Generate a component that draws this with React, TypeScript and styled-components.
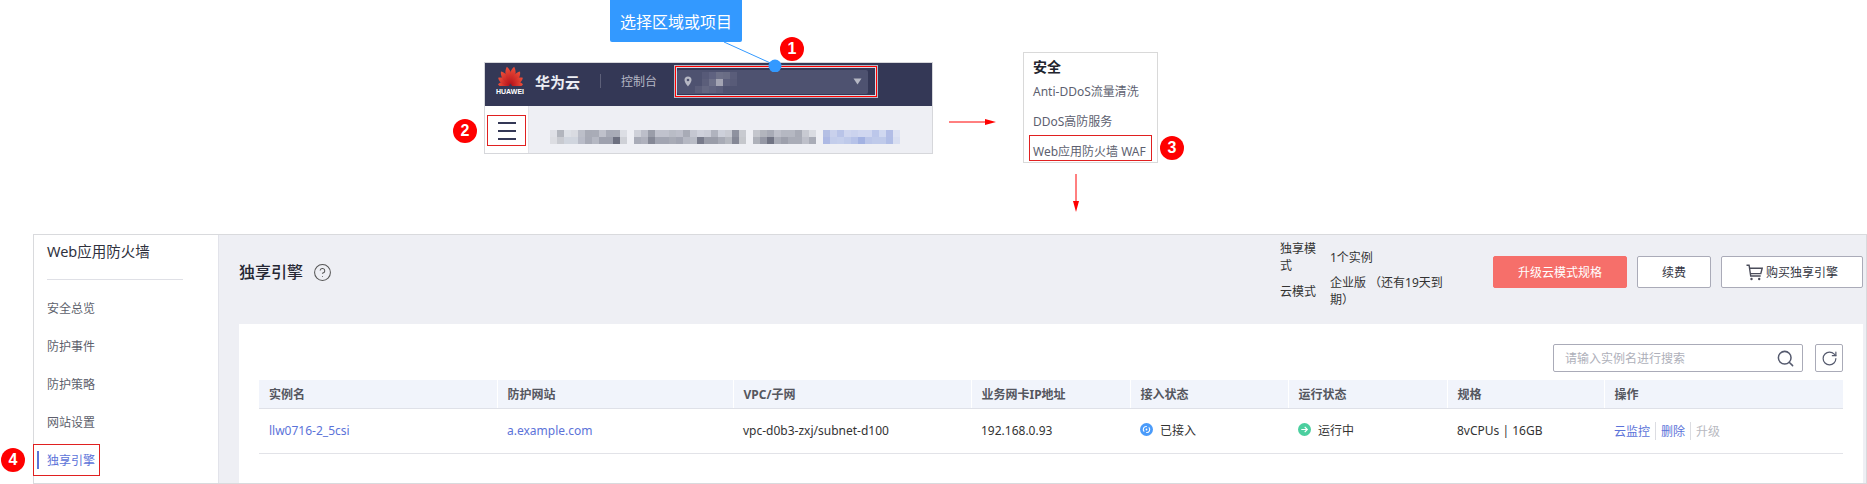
import React from 'react';
import styled, { createGlobalStyle } from 'styled-components';
import { CircleHelp, RotateCw, Search } from 'lucide-react';

const GlobalStyle = createGlobalStyle`
  html, body {
    margin: 0;
    padding: 0;
    background: #fff;
  }
  body {
    font-family: "Noto Sans", "Noto Sans CJK SC", sans-serif;
    font-size: 12px;
    color: #333;
  }
`;

const CELL = 7;

const mosaicRows: [number, number, string[]][] = [
  [0, 0, 'dfe0e6 b2b5bd dde0e6 d9dbe1 bcbfc9 a8abb6 a9acb7 bfc1cb a8abb7 a9acb7 dcdee4'.split(' ')],
  [0, 1, 'dcdde2 c8cad0 d0d5de d0d5de b9bcc8 a7aab6 b5b8c3 9ea1ae 9ea1ae 6d7080 cfd1d7'.split(' ')],
  [12, 0, 'cfd1d9 bcbec9 9a9da9 c0c2cd c0c2cd b9bcc6 bdbfca a8abb6 c5c7d1 cfd1db cbcdd7 b0b3be cdd0da c9cbd3 8f929f c8cad0'.split(' ')],
  [12, 1, 'a9acb8 afb1bd 858896 a2a5b2 a2a5b2 a8abb6 a2a5b2 b5b8c3 b9bcc6 787b8b 9a9da9 9a9da9 a8abb6 b5b8c0 858896 c5c7cc'.split(' ')],
  [29, 0, 'c4c6cd b2b5bd a8abb6 bec0ca b5b8c2 b5b8c2 a8abb6 c8cad2 dadce2'.split(' ')],
  [29, 1, 'aeb1ba 9598a5 717484 a8abb6 9da0ac a9acb7 a9acb7 bec0ca a9acb7'.split(' ')],
  [39, 0, 'b4bfe4 c9d1ec b9c4e8 cfd6ef cbd3ee d0d7f0 d0d7f0 bcc7ea d0d8f0 b2bde6 dde2f3'.split(' ')],
  [39, 1, 'adb9e4 c3cdeb c5cfec bfcaea b6c2e8 a3b2e2 bbc6e9 bfcaea bfcaea b0bde6 d8def1'.split(' ')],
];

const regionRows: [number, number, string[]][] = [
  [1, 0, '575a78 5f6280 6d7088 6a6d85 5a5d7a'.split(' ')],
  [1, 1, '5b5e7a 6d7089 a3a4b3 5c5f7c 585b78'.split(' ')],
  [0, 2, '5a5d79 646781 5f627e 5a5d7a'.split(' ')],
];

const columns = [
  { title: '实例名', width: 238 },
  { title: '防护网站', width: 236 },
  { title: 'VPC/子网', width: 238 },
  { title: '业务网卡IP地址', width: 159 },
  { title: '接入状态', width: 158 },
  { title: '运行状态', width: 159 },
  { title: '规格', width: 157 },
  { title: '操作', width: 239 },
];

const navItems = ['安全总览', '防护事件', '防护策略', '网站设置'];

const petals = [
  { angle: -84, length: 12.5 },
  { angle: -58, length: 14.5 },
  { angle: -34, length: 17 },
  { angle: -11, length: 19 },
  { angle: 11, length: 19 },
  { angle: 34, length: 17 },
  { angle: 58, length: 14.5 },
  { angle: 84, length: 12.5 },
];

const Mosaic: React.FC<{ rows: [number, number, string[]][]; width: number; height: number }> = ({ rows, width, height }) => (
  <svg width={width} height={height} viewBox={`0 0 ${width} ${height}`}>
    {rows.map(([start, row, colors]) =>
      colors.map((color, i) => (
        <rect
          key={`${start}-${row}-${i}`}
          x={(start + i) * CELL}
          y={row * CELL}
          width={CELL}
          height={CELL}
          fill={`#${color}`}
        />
      ))
    )}
  </svg>
);

const HuaweiLogo = () => (
  <svg width="27" height="20" viewBox="0 0 27 20">
    <defs>
      <linearGradient id="petal" x1="0" y1="0" x2="0" y2="1">
        <stop offset="0" stopColor="#f0503a" />
        <stop offset="1" stopColor="#b5121b" />
      </linearGradient>
    </defs>
    {petals.map(({ angle, length }) => (
      <path
        key={angle}
        transform={`translate(13.5 19.5) rotate(${angle})`}
        d={`M0 -1 C-4.2 -${length * 0.4} -3.4 -${length * 0.8} 0 -${length} C3.4 -${length * 0.8} 4.2 -${length * 0.4} 0 -1Z`}
        fill="url(#petal)"
      />
    ))}
  </svg>
);

const CartIcon = () => (
  <svg width="17" height="17" viewBox="0 0 17 17" fill="none" stroke="#4a4c5a" strokeWidth="1.4">
    <path d="M0.5 1.2h2.6l1.6 10.8h10" />
    <path d="M3.6 4.2h12.6l-1.4 5.4H4.4" />
    <circle cx="5.5" cy="15" r="1.2" fill="#4a4c5a" stroke="none" />
    <circle cx="13.2" cy="15" r="1.2" fill="#4a4c5a" stroke="none" />
  </svg>
);

const LinkedIcon = () => (
  <svg width="13" height="13" viewBox="0 0 13 13">
    <circle cx="6.5" cy="6.5" r="6.5" fill="#4a9bfa" />
    <path d="M4.2 8.6a3 3 0 0 1 2.6-5.1M8.8 4.4a3 3 0 0 1-2.6 5.1" fill="none" stroke="#fff" strokeWidth="1.1" />
    <circle cx="6.5" cy="6.5" r="0.9" fill="#fff" />
  </svg>
);

const RunningIcon = () => (
  <svg width="13" height="13" viewBox="0 0 13 13">
    <circle cx="6.5" cy="6.5" r="6.5" fill="#4bcf9f" />
    <path d="M3.3 6.5h6M6.7 3.9l2.6 2.6-2.6 2.6" fill="none" stroke="#fff" strokeWidth="1.2" />
  </svg>
);

const App: React.FC = () => (
  <Page>
    <GlobalStyle />
    <Diagram>
      <Callout>选择区域或项目</Callout>
      <Leader width="60" height="30" viewBox="0 0 60 30">
        <line x1="2" y1="0" x2="55" y2="24" stroke="#3399ff" strokeWidth="1" />
        <circle cx="53" cy="24" r="6.5" fill="#3399ff" />
      </Leader>

      <ConsoleShot>
        <TopBar>
          <LogoBlock>
            <HuaweiLogo />
            <LogoText>HUAWEI</LogoText>
          </LogoBlock>
          <Brand>华为云</Brand>
          <BarDivider />
          <ConsoleLabel>控制台</ConsoleLabel>
          <RegionBox>
            <Badge>1</Badge>
            <RegionSelect>
              <svg width="8" height="11" viewBox="0 0 8 11">
                <path d="M4 0.5a3.5 3.5 0 0 1 3.5 3.5C7.5 6.5 4 10.5 4 10.5S0.5 6.5 0.5 4A3.5 3.5 0 0 1 4 0.5Z" fill="#b6b8c4" />
                <circle cx="4" cy="4" r="1.3" fill="#4e5270" />
              </svg>
              <RegionMosaic>
                <Mosaic rows={regionRows} width={42} height={21} />
              </RegionMosaic>
              <svg width="9" height="7" viewBox="0 0 9 7">
                <path d="M0.5 0.5h8L4.5 6.5Z" fill="#b6b8c4" />
              </svg>
            </RegionSelect>
          </RegionBox>
        </TopBar>
        <SubBar>
          <MenuColumn>
            <Hamburger>
              <Badge $side="left" $gap={11}>2</Badge>
              <HamburgerLine />
              <HamburgerLine />
              <HamburgerLine />
            </Hamburger>
          </MenuColumn>
          <Crumbs>
            <Mosaic rows={mosaicRows} width={350} height={14} />
          </Crumbs>
        </SubBar>
      </ConsoleShot>

      <ArrowRight width="48" height="8" viewBox="0 0 48 8">
        <path d="M0 4h36" stroke="#f00" strokeWidth="1" />
        <path d="M36 1l11 3-11 3Z" fill="#f00" />
      </ArrowRight>

      <MenuColumnFlow>
        <MenuCard>
          <MenuTitle>安全</MenuTitle>
          <MenuItem>Anti-DDoS流量清洗</MenuItem>
          <MenuItem>DDoS高防服务</MenuItem>
          <MenuItem $picked>
            Web应用防火墙 WAF
            <Badge $side="right" $gap={8}>3</Badge>
          </MenuItem>
        </MenuCard>
        <ArrowDown width="8" height="39" viewBox="0 0 8 39">
          <path d="M4 0v28" stroke="#f00" strokeWidth="1" />
          <path d="M1 27l3 11 3-11Z" fill="#f00" />
        </ArrowDown>
      </MenuColumnFlow>
    </Diagram>

    <Panel>
      <Sidebar>
        <SideTitle>Web应用防火墙</SideTitle>
        <SideDivider />
        <NavList>
          {navItems.map((item) => (
            <NavItem key={item}>{item}</NavItem>
          ))}
          <NavItem $active>
            <ActiveBar />
            独享引擎
            <Badge $side="left" $gap={8}>4</Badge>
          </NavItem>
        </NavList>
      </Sidebar>

      <Content>
        <ContentHeader>
          <PageTitle>独享引擎</PageTitle>
          <CircleHelp size={19} strokeWidth={1.3} color="#555" />
          <InfoGrid>
            <InfoLabel>独享模式</InfoLabel>
            <span>1个实例</span>
            <InfoLabel>云模式</InfoLabel>
            <span>企业版 （还有19天到期）</span>
          </InfoGrid>
          <Actions>
            <Button $primary $width={134}>升级云模式规格</Button>
            <Button $width={74}>续费</Button>
            <Button $width={142}>
              <CartIcon />
              购买独享引擎
            </Button>
          </Actions>
        </ContentHeader>

        <Card>
          <SearchRow>
            <SearchBox>
              <SearchHint>请输入实例名进行搜索</SearchHint>
              <Search size={19} strokeWidth={1.9} color="#555a6e" />
            </SearchBox>
            <IconButton>
              <RotateCw size={17} strokeWidth={1.7} color="#555a6e" />
            </IconButton>
          </SearchRow>

          <Table>
            <thead>
              <tr>
                {columns.map((col) => (
                  <HeadCell key={col.title} $width={col.width}>{col.title}</HeadCell>
                ))}
              </tr>
            </thead>
            <tbody>
              <tr>
                <Cell><TextLink>llw0716-2_5csi</TextLink></Cell>
                <Cell><TextLink>a.example.com</TextLink></Cell>
                <Cell>vpc-d0b3-zxj/subnet-d100</Cell>
                <Cell>192.168.0.93</Cell>
                <Cell><Status><LinkedIcon />已接入</Status></Cell>
                <Cell><Status><RunningIcon />运行中</Status></Cell>
                <Cell>8vCPUs | 16GB</Cell>
                <Cell>
                  <OpLinks>
                    <TextLink>云监控</TextLink>
                    <TextLink>删除</TextLink>
                    <DisabledLink>升级</DisabledLink>
                  </OpLinks>
                </Cell>
              </tr>
            </tbody>
          </Table>
        </Card>
      </Content>
    </Panel>
  </Page>
);

// Styled Components
const Page = styled.div`
  width: 1867px;
  height: 484px;
  overflow: hidden;
`;

const Diagram = styled.div`
  position: relative;
  display: flex;
  align-items: flex-start;
  height: 234px;
  padding-left: 484px;
  box-sizing: border-box;
`;

const Callout = styled.div`
  position: absolute;
  left: 610px;
  top: 0;
  width: 132px;
  height: 42px;
  display: flex;
  align-items: center;
  justify-content: center;
  background: #3399ff;
  border-radius: 0 0 2px 2px;
  color: #fff;
  font-size: 16px;
`;

const Leader = styled.svg`
  position: absolute;
  left: 722px;
  top: 42px;
  z-index: 2;
`;

const Badge = styled.span<{ $side?: 'left' | 'right'; $gap?: number }>`
  position: absolute;
  width: 24px;
  height: 24px;
  border-radius: 50%;
  background: #f00;
  color: #fff;
  font-family: "Liberation Sans", sans-serif;
  font-size: 16px;
  font-weight: 700;
  line-height: 24px;
  text-align: center;
  ${(p) => (p.$side === 'left' ? `right: calc(100% + ${p.$gap}px); top: 50%; transform: translateY(-50%);` : '')}
  ${(p) => (p.$side === 'right' ? `left: calc(100% + ${p.$gap}px); top: 50%; transform: translateY(-50%);` : '')}
  ${(p) => (!p.$side ? 'left: 104px; top: -30px;' : '')}
`;

const ConsoleShot = styled.div`
  width: 449px;
  height: 92px;
  margin-top: 62px;
  box-sizing: border-box;
  border: 1px solid #d6d7db;
  background: #eeeff4;
`;

const TopBar = styled.div`
  display: flex;
  align-items: center;
  height: 43px;
  padding-bottom: 7px;
  box-sizing: border-box;
  background: #343856;
`;

const LogoBlock = styled.div`
  width: 50px;
  display: flex;
  flex-direction: column;
  align-items: center;
  color: #fff;
`;

const LogoText = styled.span`
  font-family: "Liberation Sans", sans-serif;
  font-size: 7px;
  font-weight: 700;
  line-height: 8px;
  margin-top: 2px;
`;

const Brand = styled.span`
  font-size: 15px;
  font-weight: 700;
  color: #eceef4;
`;

const BarDivider = styled.span`
  width: 1px;
  height: 14px;
  margin: 0 20px;
  background: #5d6079;
`;

const ConsoleLabel = styled.span`
  font-size: 12px;
  color: #b5b7c5;
`;

const RegionBox = styled.div`
  position: relative;
  flex: none;
  width: 202px;
  height: 31px;
  margin-left: 18px;
  padding: 3px 1px 0;
  box-sizing: border-box;
  border: 1px solid #f00;
  outline: 1px solid #b6b8c4;
  box-shadow: inset 0 0 0 1px #d8d9e2;
`;

const RegionSelect = styled.div`
  display: flex;
  align-items: center;
  justify-content: space-between;
  width: 191px;
  height: 24px;
  padding: 0 6px 0 7px;
  box-sizing: border-box;
  border-radius: 2px;
  background: #4e5270;
`;

const RegionMosaic = styled.div`
  display: flex;
  flex: 1;
  margin: 2px 0 0 3px;
`;

const SubBar = styled.div`
  display: flex;
  height: 47px;
`;

const MenuColumn = styled.div`
  width: 44px;
  padding: 9px 0 0 2px;
  box-sizing: border-box;
  background: #fff;
  border-right: 1px solid #e2e3e8;
`;

const Hamburger = styled.div`
  position: relative;
  width: 39px;
  height: 31px;
  box-sizing: border-box;
  border: 1px solid #e02020;
  display: flex;
  flex-direction: column;
  align-items: center;
  justify-content: center;
  gap: 6px;
`;

const HamburgerLine = styled.span`
  width: 18px;
  height: 2px;
  background: #343856;
`;

const Crumbs = styled.div`
  padding: 24px 0 0 21px;
  display: flex;
  line-height: 0;
`;

const ArrowRight = styled.svg`
  margin: 118px 0 0 16px;
  flex: none;
`;

const MenuColumnFlow = styled.div`
  display: flex;
  flex-direction: column;
  align-items: flex-start;
  margin-left: 26px;
  margin-top: 52px;
`;

const MenuCard = styled.div`
  width: 135px;
  height: 111px;
  box-sizing: border-box;
  border: 1px solid #d9d9d9;
  padding: 4px 5px 0;
`;

const MenuTitle = styled.div`
  padding-left: 4px;
  height: 20px;
  line-height: 20px;
  font-size: 14px;
  font-weight: 700;
  color: #22242e;
`;

const MenuItem = styled.div<{ $picked?: boolean }>`
  position: relative;
  padding-left: 4px;
  margin-top: ${(p) => (p.$picked ? '-2px' : '0')};
  height: ${(p) => (p.$picked ? '26px' : '30px')};
  line-height: ${(p) => (p.$picked ? '34px' : '30px')};
  box-sizing: border-box;
  white-space: nowrap;
  font-size: 12px;
  color: #5d5f70;
  ${(p) => (p.$picked ? 'outline: 1px solid #e02020; outline-offset: -1px;' : '')}
`;

const ArrowDown = styled.svg`
  margin: 11px 0 0 49px;
`;

const Panel = styled.div`
  display: flex;
  width: 1834px;
  height: 250px;
  margin-left: 33px;
  box-sizing: border-box;
  border: 1px solid #d9dadd;
  background: #eeeff4;
`;

const Sidebar = styled.div`
  width: 185px;
  flex: none;
  box-sizing: border-box;
  background: #fff;
  border-right: 1px solid #e2e3ea;
  padding: 5px 0 0 13px;
`;

const SideTitle = styled.div`
  font-size: 14.5px;
  line-height: 22px;
  color: #30323e;
`;

const SideDivider = styled.div`
  width: 136px;
  height: 1px;
  margin-top: 17px;
  background: #dfe0e6;
`;

const NavList = styled.div`
  margin: 10px 0 0 -13px;
`;

const NavItem = styled.div<{ $active?: boolean }>`
  position: relative;
  width: ${(p) => (p.$active ? '67px' : 'auto')};
  height: ${(p) => (p.$active ? '32px' : '38px')};
  line-height: ${(p) => (p.$active ? '33px' : '38px')};
  margin: ${(p) => (p.$active ? '2px 0 0 -1px' : '0')};
  padding-left: ${(p) => (p.$active ? '14px' : '13px')};
  box-sizing: border-box;
  font-size: 12px;
  color: ${(p) => (p.$active ? '#5c73d9' : '#5d5f6c')};
  ${(p) => (p.$active ? 'outline: 1px solid #e02020; outline-offset: -1px;' : '')}
`;

const ActiveBar = styled.span`
  position: absolute;
  left: 4px;
  top: 7px;
  width: 2px;
  height: 18px;
  background: #5c73d9;
`;

const Content = styled.div`
  flex: 1;
  min-width: 0;
  display: flex;
  flex-direction: column;
`;

const ContentHeader = styled.div`
  display: flex;
  align-items: flex-start;
  height: 89px;
  padding: 5px 3px 0 20px;
  box-sizing: border-box;

  > svg {
    margin: 23px 0 0 10px;
  }
`;

const PageTitle = styled.h1`
  margin: 16px 0 0;
  font-size: 16px;
  font-weight: 500;
  line-height: 32px;
  color: #252733;
`;

const InfoGrid = styled.div`
  display: grid;
  grid-template-columns: 38px 113px;
  column-gap: 12px;
  align-items: center;
  width: 163px;
  margin: 0 50px 0 auto;
  line-height: 17px;
  color: #333;
`;

const InfoLabel = styled.span`
  word-break: break-all;
`;

const Actions = styled.div`
  display: flex;
  gap: 10px;
  margin-top: 16px;
`;

const Button = styled.div<{ $primary?: boolean; $width: number }>`
  display: flex;
  align-items: center;
  justify-content: center;
  gap: 3px;
  width: ${(p) => p.$width}px;
  height: 32px;
  box-sizing: border-box;
  border-radius: 2px;
  border: 1px solid ${(p) => (p.$primary ? '#f66f6a' : '#aaabb8')};
  background: ${(p) => (p.$primary ? '#f66f6a' : '#fff')};
  color: ${(p) => (p.$primary ? '#fff' : '#33353f')};
`;

const Card = styled.div`
  flex: 1;
  margin-right: 3px;
  margin-left: 20px;
  padding: 20px 20px 0;
  background: #fff;
`;

const SearchRow = styled.div`
  display: flex;
  justify-content: flex-end;
  gap: 12px;
  height: 28px;
  margin-bottom: 8px;
`;

const SearchBox = styled.div`
  display: flex;
  align-items: center;
  justify-content: space-between;
  width: 250px;
  padding: 0 7px 0 11px;
  box-sizing: border-box;
  border: 1px solid #aaabb8;
  border-radius: 2px;
`;

const SearchHint = styled.span`
  color: #aeb0ba;
`;

const IconButton = styled.div`
  display: flex;
  align-items: center;
  justify-content: center;
  width: 28px;
  box-sizing: border-box;
  border: 1px solid #aaabb8;
  border-radius: 2px;
`;

const Table = styled.table`
  width: 1584px;
  table-layout: fixed;
  border-collapse: collapse;
`;

const HeadCell = styled.th<{ $width: number }>`
  width: ${(p) => p.$width}px;
  height: 28px;
  padding: 0 0 0 10px;
  box-sizing: border-box;
  background: #f1f4fb;
  border-bottom: 1px solid #dfe1e8;
  border-right: 1px solid #fff;
  text-align: left;
  font-size: 12px;
  font-weight: 700;
  color: #55575f;

  &:last-child {
    border-right: 0;
  }
`;

const Cell = styled.td`
  height: 45px;
  padding: 0 0 0 10px;
  box-sizing: border-box;
  border-bottom: 1px solid #e2e3e8;
  color: #333;
  white-space: nowrap;
`;

const TextLink = styled.span`
  color: #5c73d9;
`;

const DisabledLink = styled.span`
  color: #b8b9c0;
`;

const Status = styled.span`
  display: inline-flex;
  align-items: center;
  gap: 7px;
`;

const OpLinks = styled.span`
  display: inline-flex;

  > * + * {
    margin-left: 5px;
    padding-left: 5px;
    border-left: 1px solid #dcdde2;
  }
`;

export default App;
